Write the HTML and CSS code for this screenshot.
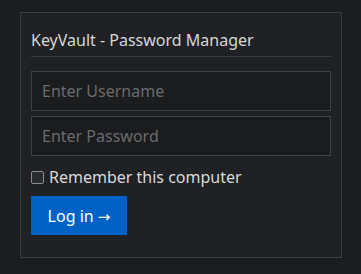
FILE: index.html
```html
<!DOCTYPE html>
<html lang="en">
<head>
    <meta charset="UTF-8">
    <meta name="viewport" content="width=device-width, initial-scale=1.0">
    <title>KeyVault - Password Manager</title>
    <link rel="stylesheet" href="styles.css">
</head>
<body>
    <div class="panel">
        <h1 class="title">KeyVault - Password Manager</h1>
        <form class="login-form" onsubmit="return false;">
            <input class="field" type="text" placeholder="Enter Username">
            <input class="field" type="password" placeholder="Enter Password">
            <label class="remember">
                <span class="box"></span>
                Remember this computer
            </label>
            <div class="actions">
                <button type="submit" class="login-button">Log in <span class="arrow">&rarr;</span></button>
            </div>
        </form>
    </div>
</body>
</html>
```

FILE: styles.css
```css
body {
    font-family: "Noto Sans", "Open Sans", sans-serif;
    background-color: #1b1c1e;
    margin: 0;
    padding: 12px 19px 0 20px;
    color: #d8d9da;
}
.panel {
    background-color: #202124;
    border: 1px solid #3a3b3e;
    padding: 16px 10px 22px 10px;
}
.title {
    font-size: 16px;
    font-weight: normal;
    line-height: 22px;
    margin: 0 0 14px 0;
    padding-bottom: 5px;
    border-bottom: 1px solid #3a3b3e;
    color: #d6d7d8;
}
.login-form {
    display: flex;
    flex-direction: column;
}
.field {
    height: 40px;
    box-sizing: border-box;
    background-color: #1b1c1e;
    border: 1px solid #3f4043;
    padding: 0 10px;
    font-family: inherit;
    font-size: 16px;
    color: #d6d7d8;
    margin-bottom: 5px;
}
.field::placeholder {
    color: #6a6b6d;
}
.remember {
    display: flex;
    align-items: center;
    font-size: 16px;
    line-height: 22px;
    margin-top: 5px;
    color: #d8d9da;
}
.box {
    width: 11px;
    height: 11px;
    border: 1px solid #8a8b8e;
    border-radius: 2px;
    background-color: #2a2b2e;
    margin-right: 5px;
}
.actions {
    margin-top: 8px;
}
.login-button {
    background-color: #0062c4;
    color: #ffffff;
    font-family: inherit;
    font-size: 16px;
    height: 39px;
    width: 96px;
    border: none;
    border-radius: 0;
    cursor: pointer;
}
.arrow {
    font-family: "DejaVu Sans", sans-serif;
    font-size: 15px;
}
```
